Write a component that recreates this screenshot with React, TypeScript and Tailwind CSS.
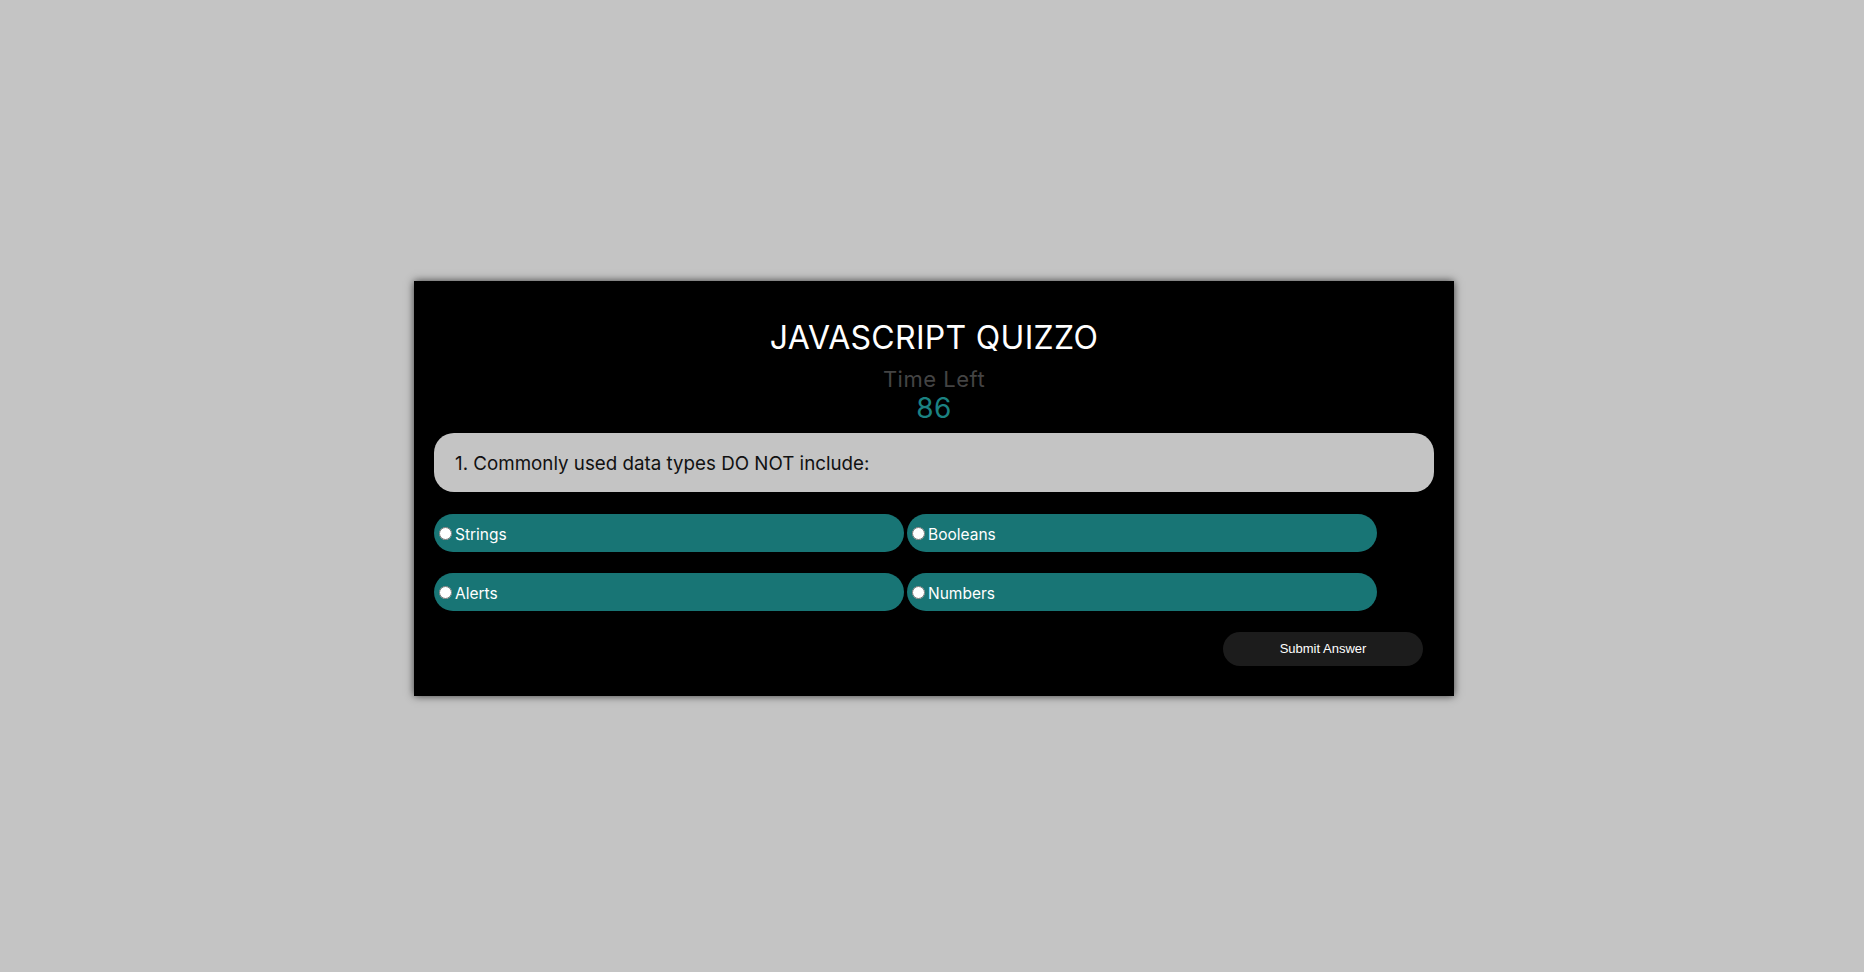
const choices = ["Strings", "Booleans", "Alerts", "Numbers"];

function Choice({ label }: { label: string }) {
  return (
    <label className="flex h-[38px] w-[470px] cursor-pointer items-center rounded-full bg-[#187575] pt-[2px] text-[15.5px] text-white">
      <input
        type="radio"
        name="answer"
        value={label}
        className="mb-[1px] ml-[5px] mr-[3px] h-[13px] w-[13px]"
      />
      <span className="pt-[2px]">{label}</span>
    </label>
  );
}

export default function App() {
  return (
    <div className="flex min-h-screen items-center justify-center bg-[#c4c4c4] pl-[4px] pt-[4px] font-['Inter',sans-serif]">
      <div className="w-[1040px] bg-black px-5 pb-[30px] pt-[39px] shadow-[0_0_8px_rgba(0,0,0,0.7)]">
        <h1 className="text-center text-[32px] leading-[36px] tracking-[0.3px] text-white">
          JAVASCRIPT QUIZZO
        </h1>
        <p className="mt-[11px] text-center text-[22px] leading-[24px] tracking-[0.5px] text-[#444444]">
          Time Left
        </p>
        <p className="mt-[3px] text-center text-[28px] leading-[28px] tracking-[0.5px] text-[#1b8282]">
          86
        </p>

        <div className="mt-[11px] flex h-[59px] items-center rounded-[20px] bg-[#c4c4c4] pl-[21px] pt-[4px] text-[18.75px] text-[#111]">
          1. Commonly used data types DO NOT include:
        </div>

        <div className="mt-[22px] flex flex-col gap-[21px]">
          <div className="flex gap-[3px]">
            <Choice label={choices[0]} />
            <Choice label={choices[1]} />
          </div>
          <div className="flex gap-[3px]">
            <Choice label={choices[2]} />
            <Choice label={choices[3]} />
          </div>
        </div>

        <div className="mt-[21px] flex justify-end pr-[11px]">
          <button className="h-[34px] w-[200px] rounded-full bg-[#1c1c1c] font-['Liberation_Sans',Arial,sans-serif] text-[13px] text-white">
            Submit Answer
          </button>
        </div>
      </div>
    </div>
  );
}
